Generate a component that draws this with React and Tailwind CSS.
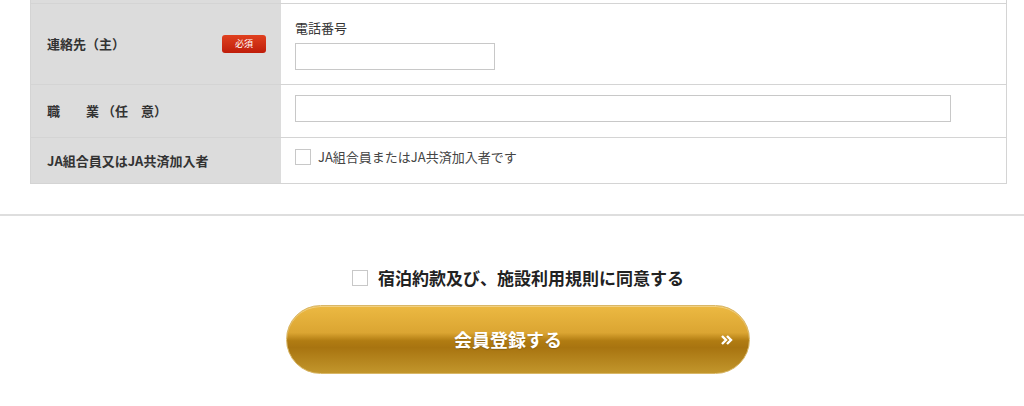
import React from "react";

const font = { fontFamily: '"Noto Sans CJK JP", "Noto Sans", sans-serif' };

const Row = ({ label, badge, children, className }) => (
  <div className={`flex border-t border-[#d4d4d4] ${className || ""}`}>
    <div className="w-[250px] shrink-0 bg-[#dcdcdc] flex items-center justify-between pl-[16px] pr-[15px]">
      <span className="text-[13px] font-bold text-[#333]">{label}</span>
      {badge && (
        <span className="w-[44px] h-[18px] rounded-[3px] bg-gradient-to-b from-[#e0401f] to-[#bf1c0a] text-white text-[9px] flex items-center justify-center">
          必須
        </span>
      )}
    </div>
    <div className="flex-1 bg-white pl-[14px] pr-[15px]">{children}</div>
  </div>
);

export default function App() {
  return (
    <div className="w-[1024px] h-[406px] bg-white overflow-hidden" style={font}>
      <div className="mx-[30px] w-[977px] border-x border-b border-[#d4d4d4]">
        <div className="flex h-[3px]">
          <div className="w-[250px] bg-[#dcdcdc]" />
          <div className="flex-1" />
        </div>
        <Row label="連絡先（主）" badge className="h-[81px]">
          <div className="pt-[15px] text-[13px] text-[#333] leading-[18px]">電話番号</div>
          <input className="mt-[6px] w-[200px] h-[27px] border border-[#c8c8c8] bg-white" />
        </Row>
        <Row label="職　　業 （任　意）" className="h-[53px]">
          <div className="pt-[10px]">
            <input className="w-[656px] h-[27px] border border-[#c8c8c8] bg-white" />
          </div>
        </Row>
        <Row label="JA組合員又はJA共済加入者" className="h-[46px]">
          <label className="flex items-start pt-[11px] gap-[7px] text-[13px] text-[#444]">
            <span className="w-[16px] h-[16px] border border-[#c8c8c8] bg-white shrink-0" />
            <span className="leading-[15px]">JA組合員またはJA共済加入者です</span>
          </label>
        </Row>
      </div>

      <div className="mt-[30px] h-[2px] bg-[#dedede]" />

      <div className="mt-[51px] pl-[12px] flex items-center justify-center gap-[10px]">
        <span className="w-[16px] h-[16px] border border-[#c8c8c8] bg-white" />
        <span className="text-[17px] font-bold text-[#222] leading-[22px]">
          宿泊約款及び、施設利用規則に同意する
        </span>
      </div>

      <div className="mt-[16px] pl-[12px] flex justify-center">
        <button className="relative w-[464px] h-[69px] rounded-full border border-[#d9b767] bg-[linear-gradient(to_bottom,#ecb942_0%,#dba532_40%,#b17c12_52%,#a87410_62%,#c2962c_100%)] shadow-[inset_0_1px_0_rgba(255,255,255,0.35)] flex items-center justify-center pr-[20px]">
          <span className="text-white text-[18px] font-bold" style={{ textShadow: "0 1px 1px rgba(0,0,0,0.2)" }}>
            会員登録する
          </span>
          <svg className="absolute right-[16px] top-1/2 -translate-y-1/2" width="12" height="12" viewBox="0 0 12 12">
            <path d="M1 2 L5 6 L1 10" stroke="white" strokeWidth="2.4" fill="none" />
            <path d="M6 2 L10 6 L6 10" stroke="white" strokeWidth="2.4" fill="none" />
          </svg>
        </button>
      </div>
    </div>
  );
}
